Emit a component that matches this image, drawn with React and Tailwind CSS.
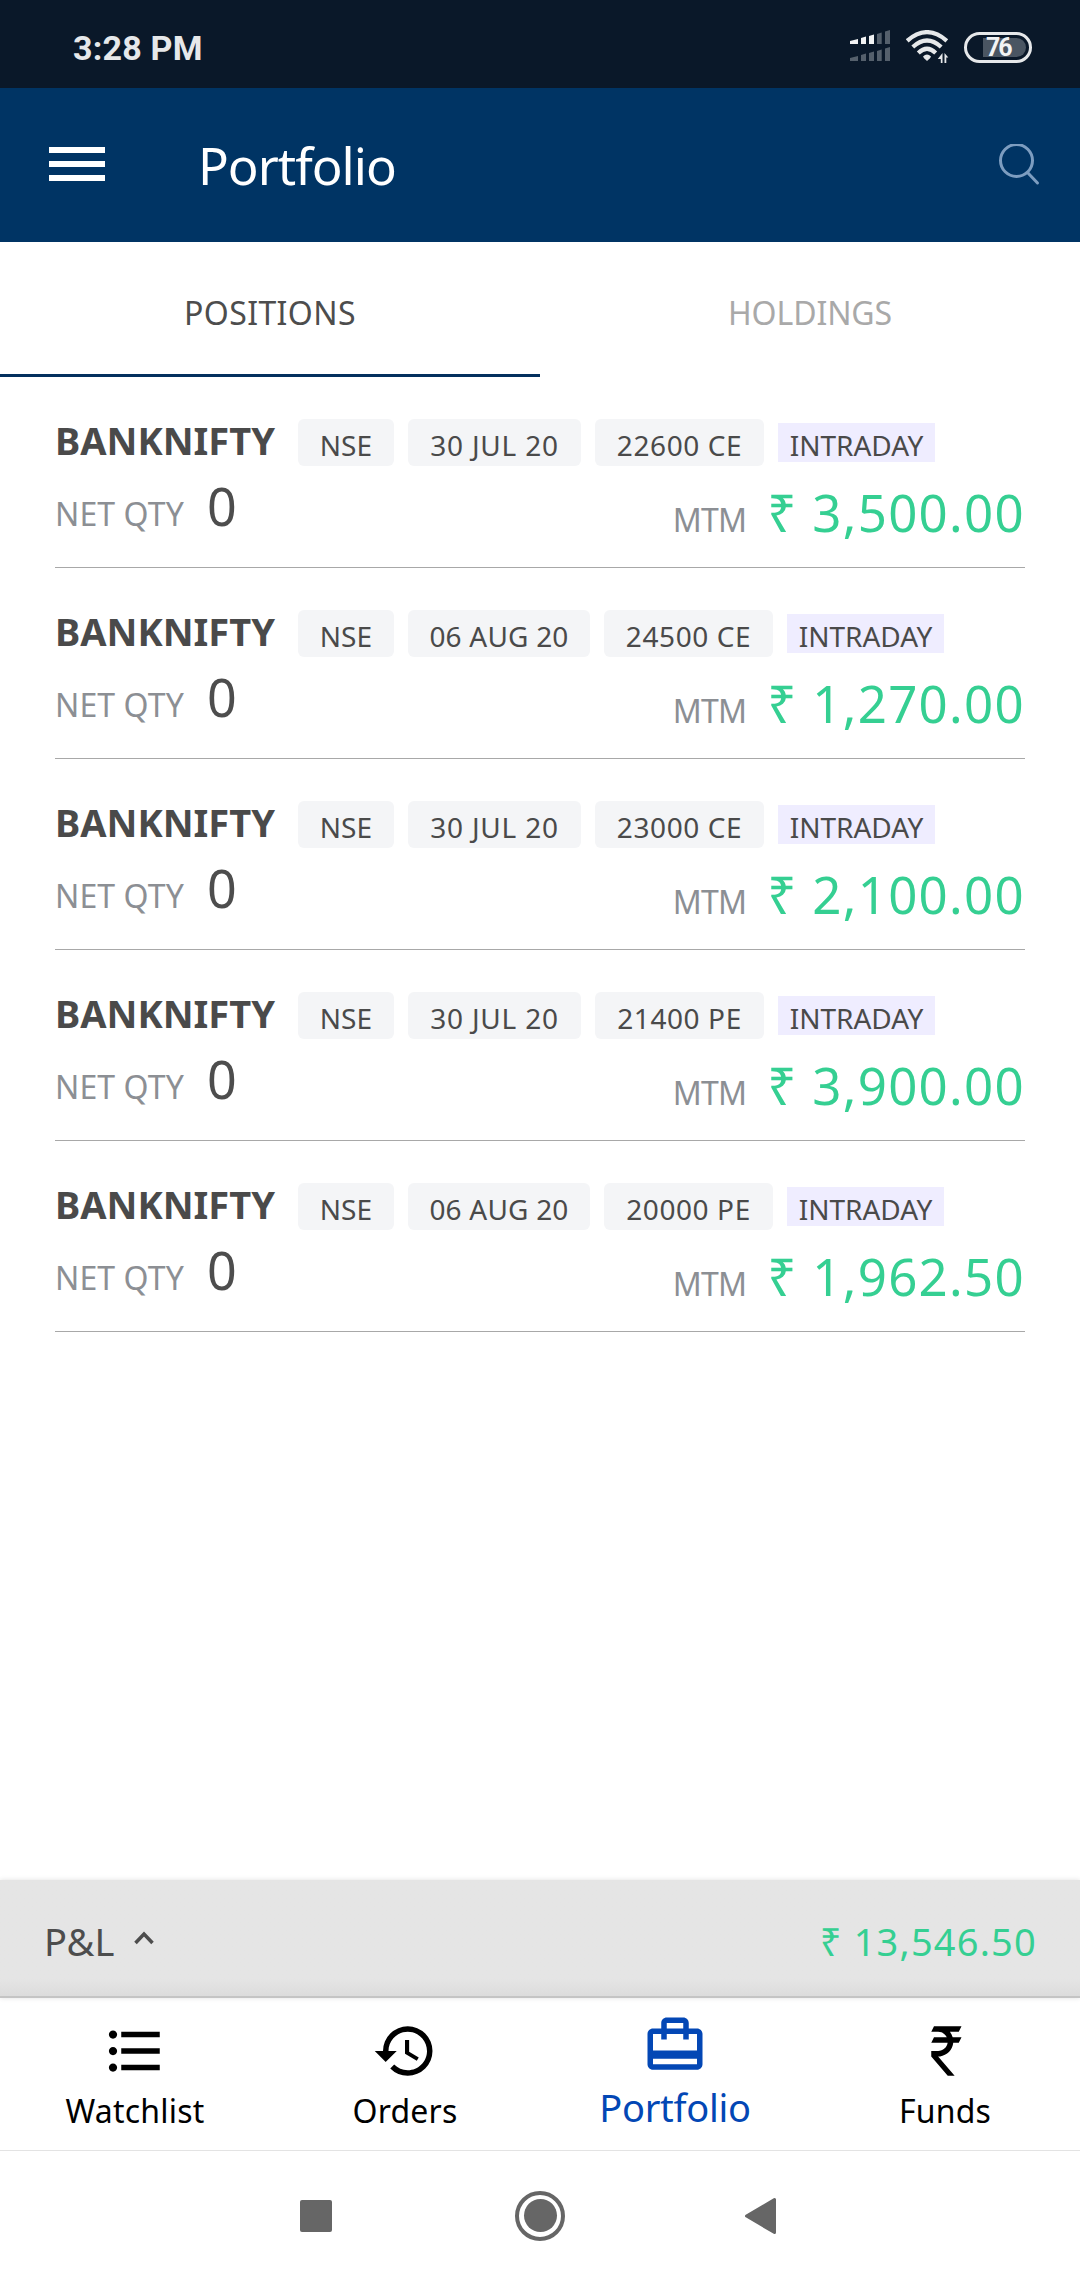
import { MdCardTravel, MdFormatListBulleted, MdHistory } from "react-icons/md";

const positions = [
  { date: "30 JUL 20", strike: "22600 CE", mtm: "3,500.00" },
  { date: "06 AUG 20", strike: "24500 CE", mtm: "1,270.00" },
  { date: "30 JUL 20", strike: "23000 CE", mtm: "2,100.00" },
  { date: "30 JUL 20", strike: "21400 PE", mtm: "3,900.00" },
  { date: "06 AUG 20", strike: "20000 PE", mtm: "1,962.50" },
];

const RupeeIcon = () => (
  <svg viewBox="0 0 24 24" className="size-[66px]" fill="currentColor">
    <path d="M8 3h10l-1 2h-3.26c.48.58.84 1.26 1.05 2H18l-1 2h-2c-.25 2.57-2.26 4.63-4.8 4.96V14h-.7l6 7H13l-6-7v-2h2.5c1.76-.05 3.2-1.3 3.46-3H7l1-2h4.66C12.1 5.82 10.9 5 9.5 5H7l1-2z" />
  </svg>
);

const StatusBar = () => (
  <div className="flex h-[88px] items-center justify-between bg-[#0a1829] pl-[73px] pr-12 font-['Roboto',sans-serif]">
    <span className="pt-[8px] text-[34px] leading-[40px] font-bold tracking-[0.2px] text-[#e6e8ea]">
      3:28 PM
    </span>
    <div className="flex items-center pt-[6px]">
      <svg width="40" height="34" viewBox="0 0 40 34">
        <g fill="#f2f3f4">
          <path d="M0 11l8-2v5H0z" />
          <path d="M11 8l5-1.500v7.500h-5z" />
          <path d="M19 6l5-1.500v9.500h-5z" />
        </g>
        <g fill="#55606c">
          <path d="M27 4l4.700-1.500V14H27z" />
          <path d="M35 1.500L40 0v14h-5z" />
          <path d="M0 28l8-2v5H0z" />
          <path d="M11 25l5-1.500V31h-5z" />
          <path d="M19 23l5-1.500V31h-5z" />
          <path d="M27 21l4.700-1.500V31H27z" />
          <path d="M35 18.500l5-1.500v14h-5z" />
        </g>
      </svg>
      <svg width="43" height="34" viewBox="0 0 43 34" className="ml-4" fill="none">
        <g stroke="#e6e8ea" strokeWidth="4.200">
          <path d="M1.200 10.800Q21 -6.500 40.800 10.800" />
          <path d="M6.800 17Q21 4 35.200 17" />
          <path d="M12.300 23Q21 14.500 29.700 23" />
        </g>
        <path d="M17 26.500Q21 22.500 25 26.500Q24.600 28 21 31Q17.500 28 17 26.500z" fill="#e6e8ea" />
        <path d="M36.500 23v10h-1.700v-4h-3zM38.500 33V23l3.800 4.500h-2V33z" fill="#e6e8ea" />
      </svg>
      <div className="ml-[15px] flex h-[31px] w-[68px] items-center rounded-full border-[3px] border-[#e6e8ea] pl-[16px]">
        <div className="flex h-[19px] w-[43px] items-center rounded-l-[2px] rounded-r-full bg-[#4a5562] pl-[3px] text-[25px] leading-[19px] font-bold tracking-[-2px] text-[#f2f3f4]">
          76
        </div>
      </div>
    </div>
  </div>
);

const Header = () => (
  <header className="flex h-[154px] items-center bg-[#003464] pl-[49px] pr-[40px] text-white">
    <div className="flex w-14 flex-col gap-2 pb-[2px]">
      <div className="h-[6px] bg-white" />
      <div className="h-[6px] bg-white" />
      <div className="h-[6px] bg-white" />
    </div>
    <h1 className="ml-[93px] text-[51px] leading-[60px] tracking-[-1px]">Portfolio</h1>
    <svg width="42" height="42" viewBox="0 0 42 42" className="ml-auto" fill="none" stroke="#7d9dc0" strokeWidth="3">
      <circle cx="18.500" cy="16.500" r="16" />
      <path d="M30 29l9.500 10" strokeLinecap="round" />
    </svg>
  </header>
);

const Tabs = () => (
  <div className="grid h-[135px] grid-cols-2 text-center text-[32px] leading-[121px]">
    <div className="border-b-[3px] border-[#03305e] pt-[10px] tracking-[0.4px] text-[#4d4d4d]">POSITIONS</div>
    <div className="pt-[10px] tracking-[-0.1px] text-[#a9a9a9]">HOLDINGS</div>
  </div>
);

const Chip = ({ children, className }) => (
  <span
    className={`flex h-[47px] shrink-0 items-center justify-center rounded-[6px] bg-[#f4f5f7] pt-[4px] ${className}`}
  >
    {children}
  </span>
);

const PositionRow = ({ date, strike, mtm }) => (
  <div className="h-[191px] border-b border-[#a8a8a8] pt-[42px] text-[#4a4a4a]">
    <div className="flex items-center text-[28px] leading-[36px]">
      <span className="w-[243px] pb-[5px] text-[38px] font-bold">BANKNIFTY</span>
      <div className="flex items-center gap-[14px]">
        <Chip className="w-[96px] tracking-[0.1px]">NSE</Chip>
        <Chip className={date.includes("AUG") ? "w-[182px] tracking-[0.2px]" : "w-[173px] tracking-[0.800px]"}>
          {date}
        </Chip>
        <Chip className="w-[169px] tracking-[0.600px]">{strike}</Chip>
        <span className="flex h-[39px] w-[157px] items-center justify-center bg-[#efedff] pt-[4px]">
          INTRADAY
        </span>
      </div>
    </div>
    <div className="mt-[10px] flex justify-between text-[32px] leading-[60px] text-[#8c8f94]">
      <div className="flex items-baseline">
        <span className="w-[152px] tracking-[0.1px]">NET QTY</span>
        <span className="text-[52px] text-[#4d4d4d]">0</span>
      </div>
      <div className="flex items-baseline pt-[6px]">
        <span className="tracking-[-0.800px]">MTM</span>
        <span className="ml-[21px] text-[51px] tracking-[1.300px] text-[#35cf92]">₹ {mtm}</span>
      </div>
    </div>
  </div>
);

const ProfitBar = () => (
  <div className="flex h-[118px] items-center justify-between border-b-2 border-[#c4c4c4] bg-[#e5e5e5] bg-linear-to-t from-[#dcdcdc] to-[#e5e5e5] to-15% pl-[44px] pr-[43px] pt-[6px] text-[38px] shadow-[0_0_5px_rgba(0,0,0,0.12)]">
    <div className="flex items-center text-[#4d4d4d]">
      P&amp;L
      <svg width="20" height="14" viewBox="0 0 20 14" className="ml-[20px] mb-[6px]" fill="none" stroke="currentColor" strokeWidth="3.500">
        <path d="M1.500 12L10 3l8.500 9" />
      </svg>
    </div>
    <span className="tracking-[1.200px] text-[#35cf92]">₹ 13,546.50</span>
  </div>
);

const NavItem = ({ icon, label }) => (
  <div className="flex flex-col items-center pt-5 text-[32px] leading-[53px] tracking-[0.2px]">
    {icon}
    {label}
  </div>
);

const BottomNav = () => (
  <nav className="grid h-[152px] grid-cols-4 text-black">
    <NavItem icon={<MdFormatListBulleted className="size-[66px]" />} label="Watchlist" />
    <NavItem icon={<MdHistory className="size-[66px]" />} label="Orders" />
    <div className="flex flex-col items-center pt-[14px] text-[38px] leading-[59px] tracking-[-0.3px] text-[#0347b5]">
      <MdCardTravel className="size-[66px]" />
      Portfolio
    </div>
    <NavItem icon={<RupeeIcon />} label="Funds" />
  </nav>
);

const SystemNav = () => (
  <div className="flex h-[130px] items-center border-t border-[#e3e3e3] pl-[300px]">
    <div className="size-8 rounded-[2px] bg-[#666]" />
    <div className="ml-[183px] flex size-[50px] items-center justify-center rounded-full border-4 border-[#666]">
      <div className="size-[33px] rounded-full bg-[#666]" />
    </div>
    <svg width="31" height="38" viewBox="0 0 31 38" className="ml-[180px]" fill="#666" stroke="#666" strokeWidth="3" strokeLinejoin="round">
      <path d="M1.500 19L29.500 2.500v33z" />
    </svg>
  </div>
);

const App = () => {
  return (
    <div className="flex h-[2280px] w-[1080px] flex-col overflow-hidden bg-white font-['Noto_Sans',sans-serif]">
      <StatusBar />
      <Header />
      <Tabs />
      <main className="flex-1 px-[55px]">
        {positions.map((position) => (
          <PositionRow key={position.strike} {...position} />
        ))}
      </main>
      <ProfitBar />
      <BottomNav />
      <SystemNav />
    </div>
  );
};

export default App;
